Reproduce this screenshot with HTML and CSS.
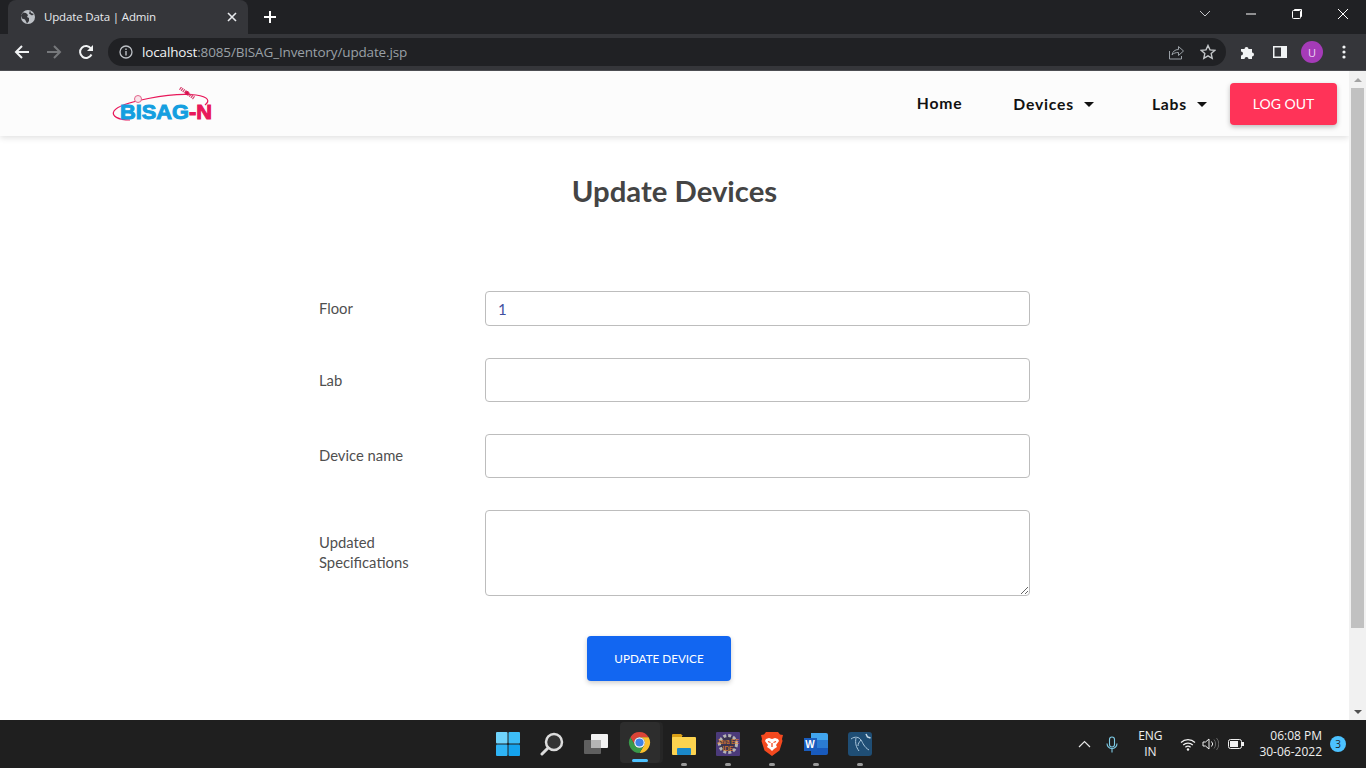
FILE: index.html
```html
<!DOCTYPE html>
<html lang="en">
<head>
    <meta charset="UTF-8">
    <title>Update Data | Admin</title>
    <link rel="stylesheet" href="styles.css">
</head>
<body>
    <div class="tabstrip">
        <div class="tab">
            <svg class="tab-icon" width="16" height="16" viewBox="0 0 16 16"><circle cx="8" cy="8" r="7" fill="#bdc1c6"/><path d="M3 3.500l3 .5 2 2-1 2 2 1v3l-2 2.500-2-4-3-1-1-3zM10 1.500l1 2.500 3 1-2 1.500-3-2z" fill="#35363a"/></svg>
            <span class="tab-title">Update Data | Admin</span>
            <svg class="tab-close" width="10" height="10" viewBox="0 0 10 10"><path d="M1 1l8 8M9 1l-8 8" stroke="#e8eaed" stroke-width="1.600"/></svg>
        </div>
        <svg class="new-tab" width="14" height="14" viewBox="0 0 14 14"><path d="M7 1v12M1 7h12" stroke="#fff" stroke-width="2"/></svg>
        <div class="window-controls">
            <div class="win-btn"><svg width="12" height="8" viewBox="0 0 12 8"><path d="M1 1l5 5 5-5" fill="none" stroke="#c4c6c9"/></svg></div>
            <div class="win-btn"><svg width="12" height="2" viewBox="0 0 12 2"><path d="M1 1h10" stroke="#fff"/></svg></div>
            <div class="win-btn"><svg width="12" height="12" viewBox="0 0 12 12"><path d="M3.500 2.500v-1h7v7h-1" fill="none" stroke="#fff"/><rect x="1.500" y="2.500" width="8" height="8" rx="1" fill="none" stroke="#fff"/></svg></div>
            <div class="win-btn"><svg width="12" height="12" viewBox="0 0 12 12"><path d="M1 1l10 10M11 1L1 11" stroke="#fff"/></svg></div>
        </div>
    </div>

    <div class="toolbar">
        <div class="tool-btn"><svg width="16" height="16" viewBox="0 0 16 16"><path d="M15 8H2M8 2L2 8l6 6" fill="none" stroke="#f1f3f4" stroke-width="2"/></svg></div>
        <div class="tool-btn"><svg width="16" height="16" viewBox="0 0 16 16"><path d="M1 8h13M8 2l6 6-6 6" fill="none" stroke="#76787b" stroke-width="2"/></svg></div>
        <div class="tool-btn"><svg width="16" height="16" viewBox="0 0 16 16"><path d="M13.500 10.500A6 6 0 1 1 13 4.500" fill="none" stroke="#f1f3f4" stroke-width="2"/><path d="M15 1v6H9z" fill="#f1f3f4"/></svg></div>
        <div class="omnibox">
            <svg class="info-icon" width="14" height="14" viewBox="0 0 14 14"><circle cx="7" cy="7" r="6" fill="none" stroke="#bdc1c6" stroke-width="1.300"/><path d="M7 6v4.500M7 3.500v1.500" stroke="#bdc1c6" stroke-width="1.400"/></svg>
            <span class="url"><span class="url-host">localhost</span>:8085/BISAG_Inventory/update.jsp</span>
            <svg class="omni-icon share-icon" width="16" height="16" viewBox="0 0 16 16"><path d="M1.500 7v8h12v-3" fill="none" stroke="#9aa0a6"/><path d="M4 11c.5-3.500 3-5.500 6.500-5.500V2.500L15.500 7l-5 4.500V8.500C8 8.500 5.500 9 4 11z" fill="none" stroke="#9aa0a6"/></svg>
            <svg class="omni-icon" width="16" height="16" viewBox="0 0 16 16"><path d="M8 1.500l2 4.400 4.700.5-3.500 3.200 1 4.700L8 11.900l-4.200 2.400 1-4.700L1.300 6.400 6 5.900z" fill="none" stroke="#c4c7ca" stroke-width="1.400"/></svg>
        </div>
        <div class="tool-btn ext-btn"><svg width="16" height="16" viewBox="0 0 16 16"><path d="M1 5h3.500a2 2 0 1 1 4 0H12v3.500a2 2 0 1 1 0 4V15H8.500a2 2 0 1 0-4 0H1v-3.500a2 2 0 1 0 0-4z" fill="#f1f3f4"/></svg></div>
        <div class="tool-btn"><svg width="14" height="12" viewBox="0 0 14 12"><rect width="14" height="12" fill="#f1f3f4"/><rect x="1.500" y="1.500" width="6.500" height="9" fill="#35363a"/></svg></div>
        <div class="tool-btn"><span class="avatar">U</span></div>
        <div class="tool-btn"><svg width="4" height="14" viewBox="0 0 4 14"><circle cx="2" cy="2" r="1.600" fill="#f1f3f4"/><circle cx="2" cy="7" r="1.600" fill="#f1f3f4"/><circle cx="2" cy="12" r="1.600" fill="#f1f3f4"/></svg></div>
    </div>

    <div class="viewport">
        <div class="page">
            <nav class="navbar">
                <a href="#" class="navbar-brand">
                    <svg width="102" height="42" viewBox="0 0 102 42">
                        <path d="M18 33C6 33-1 29 2 24 8 15 60 5 84 8 97 10 98 14 93 18" fill="none" stroke="#e8185a" stroke-width="1.200"/>
                        <path d="M68 1l14 10" stroke="#d8406f" stroke-width="3.500" stroke-dasharray="1.200 .8"/>
                        <circle cx="75" cy="6" r="2" fill="#d8104f"/>
                        <circle cx="26" cy="12" r="3.500" fill="#fbe3ea" stroke="#e0648a"/>
                        <text x="8" y="32" class="logo-text" textLength="92" lengthAdjust="spacingAndGlyphs"><tspan class="logo-blue">BISAG</tspan><tspan class="logo-pink">-N</tspan></text>
                    </svg>
                </a>
                <ul class="navbar-menu">
                    <li class="nav-home">Home</li>
                    <li class="nav-devices">Devices<span class="caret"></span></li>
                    <li class="nav-labs">Labs<span class="caret"></span></li>
                </ul>
                <button class="btn-logout">LOG OUT</button>
            </nav>

            <h1>Update Devices</h1>

            <form class="update-form">
                <label for="floor">Floor</label>
                <input type="text" id="floor" class="input-floor" value="1">
                <label for="lab" class="label-lab">Lab</label>
                <input type="text" id="lab">
                <label for="device">Device name</label>
                <input type="text" id="device">
                <label for="specs" class="label-specs">Updated Specifications</label>
                <textarea id="specs"></textarea>
                <div class="form-actions">
                    <button type="button" class="btn-update">UPDATE DEVICE</button>
                </div>
            </form>
        </div>
        <div class="scrollbar">
            <div class="scroll-arrow"><span class="arrow-up"></span></div>
            <div class="scroll-track"><div class="scroll-thumb"></div></div>
            <div class="scroll-arrow"><span class="arrow-down"></span></div>
        </div>
    </div>

    <div class="taskbar">
        <div></div>
        <div class="task-icons">
            <div class="task-item">
                <svg width="24" height="24" viewBox="0 0 24 24"><rect x="0" y="0" width="11.500" height="11.500" rx="1" fill="#6fd3fb"/><rect x="12.500" y="0" width="11.500" height="11.500" rx="1" fill="#3dbdf7"/><rect x="0" y="12.500" width="11.500" height="11.500" rx="1" fill="#2fb4f5"/><rect x="12.500" y="12.500" width="11.500" height="11.500" rx="1" fill="#14a3ee"/></svg>
            </div>
            <div class="task-item">
                <svg width="24" height="24" viewBox="0 0 24 24"><circle cx="14" cy="10" r="8" fill="#333" stroke="#dcdcdc" stroke-width="2.500"/><path d="M8 16l-6 6" stroke="#dcdcdc" stroke-width="3" stroke-linecap="round"/></svg>
            </div>
            <div class="task-item">
                <svg width="24" height="20" viewBox="0 0 24 20"><rect x="7" y="0" width="17" height="14" rx="1" fill="#f2f2f2"/><rect x="0" y="6" width="17" height="14" rx="1" fill="#5f5f5f"/><rect x="7" y="6" width="10" height="8" fill="#b5b5b5"/></svg>
            </div>
            <div class="task-item task-active">
                <svg width="23" height="23" viewBox="0 0 24 24"><path d="M12 1A11 11 0 0 1 21.530 6.500H12A5.500 5.500 0 0 0 7.240 14.750L2.470 6.500A11 11 0 0 1 12 1Z" fill="#db4437"/><path d="M21.530 6.500A11 11 0 0 1 12 23L16.760 14.750A5.500 5.500 0 0 0 12 6.500Z" fill="#fbc02d"/><path d="M2.470 6.500L7.240 14.750A5.500 5.500 0 0 0 16.760 14.750L12 23A11 11 0 0 1 2.470 6.500Z" fill="#3a9a4a"/><circle cx="12" cy="12" r="5.500" fill="#fff"/><circle cx="12" cy="12" r="4.300" fill="#3f83e8"/></svg>
                <span class="task-bar"></span>
            </div>
            <div class="task-item task-open">
                <svg width="24" height="22" viewBox="0 0 24 22"><path d="M0 2a1 1 0 0 1 1-1h8l2 2h-11z M0 3h10v3H0z" fill="#d99f16"/><rect x="0" y="4" width="24" height="18" rx="1" fill="#fcd34f"/><rect x="5" y="15" width="14" height="7" rx="1" fill="#1a88c9"/></svg>
                <span class="task-dot"></span>
            </div>
            <div class="task-item task-open">
                <svg width="24" height="24" viewBox="0 0 24 24">
                    <rect width="24" height="24" rx="1" fill="#4b3a7a"/>
                    <circle cx="12" cy="12" r="8.500" fill="#3a3350" stroke="#b5b5b5" stroke-width="3" stroke-dasharray="3 2"/>
                    <text x="12" y="11.500" class="java-text" textLength="22" lengthAdjust="spacingAndGlyphs">Java EE</text>
                    <text x="12" y="18.500" class="java-text">IDE</text>
                </svg>
                <span class="task-dot"></span>
            </div>
            <div class="task-item task-open">
                <svg width="22" height="24" viewBox="0 0 22 24"><path d="M5 0h12l2 2.500 3 .5-1 4 .5 2-3 9.500L11 24l-7.500-5.500L.5 9 1 7 0 3l3-.5z" fill="#f4491f"/><path d="M11 7l-3-1-3 1-1 2 3 4-1 2 3 2 2 2 2-2 3-2-1-2 3-4-1-2-3-1z" fill="#fff"/><path d="M7 9.500l2.500 1M15 9.500l-2.500 1M11 11v4" stroke="#f4491f" stroke-width="1.300"/></svg>
                <span class="task-dot"></span>
            </div>
            <div class="task-item task-open">
                <div class="word-icon"><span class="word-w">W</span></div>
                <span class="task-dot"></span>
            </div>
            <div class="task-item task-open">
                <svg width="24" height="24" viewBox="0 0 24 24"><rect width="24" height="24" rx="3" fill="#1f4e75"/><path d="M3 7c4-3 8-2 10 1s3 7 8 10M8 6c-1 5 0 9 3 13M13 8c-2 2-3 4-3 6" fill="none" stroke="#a9c6dc" stroke-width="1"/><path d="M18 2l1.500 3 3 1" fill="none" stroke="#c7dbe9" stroke-width="1.500"/></svg>
                <span class="task-dot"></span>
            </div>
        </div>
        <div class="tray">
            <svg class="tray-chevron" width="13" height="8" viewBox="0 0 13 8"><path d="M1 7l5.500-5.500L12 7" fill="none" stroke="#e6e6e6" stroke-width="1.200"/></svg>
            <svg class="tray-mic" width="12" height="17" viewBox="0 0 12 17"><rect x="3.500" y="1" width="5" height="10" rx="2.500" fill="none" stroke="#7ecbe6" stroke-width="1.100"/><path d="M1 7.500a5 5 0 0 0 10 0M6 13v3.500" fill="none" stroke="#7ecbe6" stroke-width="1.100"/></svg>
            <div class="tray-lang">ENG<br>IN</div>
            <svg class="tray-wifi" width="16" height="13" viewBox="0 0 16 13"><path d="M1 4.500a10 10 0 0 1 14 0M3.200 7a7 7 0 0 1 9.600 0M5.400 9.300a3.800 3.800 0 0 1 5.200 0" fill="none" stroke="#f0f0f0" stroke-width="1.200"/><circle cx="8" cy="11.500" r="1.200" fill="#f0f0f0"/></svg>
            <svg class="tray-volume" width="17" height="14" viewBox="0 0 17 14"><path d="M1 5v4h2.500L7 12V2L3.500 5z" fill="none" stroke="#f0f0f0"/><path d="M9.500 4.500a3.500 3.500 0 0 1 0 5" fill="none" stroke="#f0f0f0"/><path d="M12 2.500a7 7 0 0 1 0 9M14.500 1a9 9 0 0 1 0 12" fill="none" stroke="#666"/></svg>
            <svg class="tray-battery" width="16" height="10" viewBox="0 0 16 10"><rect x=".5" y=".5" width="13" height="9" rx="2" fill="none" stroke="#f0f0f0"/><rect x="2" y="2" width="8" height="6" fill="#f0f0f0"/><rect x="14" y="3" width="2" height="4" fill="#f0f0f0"/></svg>
            <div class="tray-clock">06:08 PM<br>30-06-2022</div>
            <span class="tray-badge">3</span>
        </div>
    </div>
</body>
</html>
```

FILE: styles.css
```css
:root {
    --chrome-dark: #202124;
    --chrome-mid: #35363a;
    --color-logout: #ff3358;
    --color-update: #1266f1;
    --color-text: #4f4f4f;
    --color-border: #bdbdbd;
}

* {
    box-sizing: border-box;
}

html, body {
    height: 100%;
}

body {
    margin: 0;
    height: 768px;
    overflow: hidden;
    display: flex;
    flex-direction: column;
    font-family: "Lato", "Liberation Sans", sans-serif;
    background-color: white;
}

/* browser frame */
.tabstrip {
    height: 34px;
    flex: none;
    display: flex;
    align-items: center;
    padding-left: 8px;
    background-color: var(--chrome-dark);
}

.tab {
    width: 240px;
    height: 34px;
    display: flex;
    align-items: center;
    padding: 0 11px 0 12px;
    background-color: var(--chrome-mid);
    border-radius: 8px 8px 0 0;
}

.tab-title {
    flex: 1;
    margin-left: 8px;
    padding-bottom: 1px;
    font-family: "Open Sans", "Noto Sans", sans-serif;
    font-size: 11.500px;
    letter-spacing: -0.15px;
    color: #e8eaed;
}

.new-tab {
    margin-left: 15px;
}

.window-controls {
    margin-left: auto;
    display: flex;
    height: 100%;
}

.win-btn {
    width: 46px;
    display: flex;
    align-items: center;
    justify-content: center;
    padding-bottom: 6px;
}

.toolbar {
    height: 37px;
    flex: none;
    display: flex;
    align-items: center;
    padding: 0 6px;
    background-color: var(--chrome-mid);
    border-bottom: 1px solid #4c4d52;
}

.tool-btn {
    width: 32px;
    height: 28px;
    flex: none;
    display: flex;
    align-items: center;
    justify-content: center;
}

.omnibox {
    width: 1118px;
    height: 28px;
    margin-left: 6px;
    display: flex;
    align-items: center;
    padding: 0 10px 0 11px;
    background-color: var(--chrome-dark);
    border-radius: 14px;
}

.url {
    flex: 1;
    margin-left: 9px;
    font-family: "Open Sans", "Noto Sans", sans-serif;
    font-size: 13.500px;
    letter-spacing: -0.15px;
    color: #9aa0a6;
}

.url-host {
    color: #f1f3f4;
}

.omni-icon {
    flex: none;
}

.share-icon {
    margin-right: 16px;
}

.ext-btn {
    margin-left: 6px;
}

.avatar {
    width: 22px;
    height: 22px;
    display: flex;
    align-items: center;
    justify-content: center;
    border-radius: 50%;
    background-color: #a53bb8;
    color: #f0d9f5;
    font-family: "Open Sans", sans-serif;
    font-size: 11px;
}

/* page */
.viewport {
    flex: 1;
    display: flex;
    min-height: 0;
}

.page {
    flex: 1;
    min-width: 0;
    overflow: hidden;
}

.navbar {
    height: 65px;
    display: flex;
    align-items: center;
    padding: 0 12px 0 112px;
    background-color: #fcfcfc;
    box-shadow: 0 2px 6px rgba(0, 0, 0, 0.12);
}

.navbar-brand {
    display: block;
    height: 42px;
    margin-top: 9px;
}

.logo-text {
    font-family: "Liberation Sans", sans-serif;
    font-size: 21px;
    font-weight: bold;
    stroke-width: 1px;
}

.logo-blue {
    fill: #149fe0;
    stroke: #149fe0;
}

.logo-pink {
    fill: #e8185a;
    stroke: #e8185a;
}

.navbar-menu {
    list-style: none;
    margin: 0 0 0 auto;
    padding: 0;
    display: flex;
    align-items: center;
    font-size: 15.700px;
    font-weight: bold;
    letter-spacing: 0.8px;
    color: #111;
}

.nav-home {
    margin-bottom: 2px;
}

.nav-devices {
    margin-left: 51px;
}

.nav-labs {
    margin-left: 58px;
}

.caret {
    display: inline-block;
    margin-left: 10px;
    vertical-align: 3px;
    border-top: 5px solid #111;
    border-left: 5px solid transparent;
    border-right: 5px solid transparent;
}

.btn-logout {
    width: 107px;
    height: 42px;
    margin-left: 23px;
    border: none;
    border-radius: 4px;
    background-color: var(--color-logout);
    color: white;
    font-family: inherit;
    font-size: 14px;
    box-shadow: 0 2px 5px rgba(0, 0, 0, 0.25);
}

h1 {
    margin: 37px 0 0;
    text-align: center;
    font-size: 29.300px;
    line-height: 36px;
    font-weight: bold;
    color: #444;
}

.update-form {
    width: 711px;
    margin: 82px 0 0 319px;
    display: grid;
    grid-template-columns: 166px 545px;
    row-gap: 32px;
    align-items: center;
    font-size: 14.800px;
    color: var(--color-text);
}

label {
    line-height: 20px;
    margin-bottom: 2px;
}

.label-lab {
    margin-bottom: 0;
}

input, textarea {
    display: block;
    width: 100%;
    height: 44px;
    margin: 0;
    padding: 0 12px;
    border: 1px solid var(--color-border);
    border-radius: 4px;
    background-color: white;
    font-family: inherit;
    font-size: 15px;
    color: #3f4fa0;
}

.input-floor {
    height: 35px;
}

textarea {
    height: 86px;
}

.label-specs {
    width: 110px;
}

.form-actions {
    grid-column: 1 / -1;
    margin: 8px 0 0 268px;
}

.btn-update {
    width: 144px;
    height: 45px;
    padding-bottom: 3px;
    border: none;
    border-radius: 4px;
    background-color: var(--color-update);
    color: white;
    font-family: inherit;
    font-size: 11.700px;
    box-shadow: 0 2px 5px rgba(0, 0, 0, 0.2);
}

.scrollbar {
    width: 17px;
    flex: none;
    display: flex;
    flex-direction: column;
    background-color: #f1f1f1;
}

.scroll-arrow {
    height: 17px;
    flex: none;
    display: flex;
    align-items: center;
    justify-content: center;
}

.arrow-up {
    border-bottom: 4px solid #a3a3a3;
    border-left: 4px solid transparent;
    border-right: 4px solid transparent;
}

.arrow-down {
    border-top: 4px solid #505050;
    border-left: 4px solid transparent;
    border-right: 4px solid transparent;
}

.scroll-track {
    flex: 1;
    padding: 0 2px;
}

.scroll-thumb {
    height: 540px;
    background-color: #c1c1c1;
}

/* windows taskbar */
.taskbar {
    height: 48px;
    flex: none;
    display: grid;
    grid-template-columns: 1fr auto 1fr;
    align-items: center;
    background-color: #1f1f1f;
    color: #f0f0f0;
}

.task-icons {
    display: flex;
    margin-left: 1px;
}

.task-item {
    position: relative;
    width: 44px;
    height: 44px;
    display: flex;
    align-items: center;
    justify-content: center;
}

.task-active {
    width: 40px;
    height: 41px;
    margin: 0 2px;
    background-color: #2d2d2d;
    border-radius: 4px;
    box-shadow: 3px 0 0 #262626;
}

.task-bar {
    position: absolute;
    left: 12px;
    bottom: 1px;
    width: 16px;
    height: 3px;
    border-radius: 2px;
    background-color: #4cc2ff;
}

.task-dot {
    position: absolute;
    left: 19px;
    bottom: 0;
    width: 6px;
    height: 3px;
    border-radius: 2px;
    background-color: #9a9a9a;
}

.java-text {
    fill: #f08a24;
    font-family: "Liberation Sans", sans-serif;
    font-size: 6.500px;
    text-anchor: middle;
}

.word-icon {
    position: relative;
    width: 24px;
    height: 22px;
    border-radius: 2px;
    background: linear-gradient(#41a5ee 0 33%, #2b7cd3 33% 66%, #185abd 66%);
    background-size: 17px 100%;
    background-position: right;
    background-repeat: no-repeat;
}

.word-w {
    position: absolute;
    left: 0;
    top: 5px;
    width: 13px;
    height: 13px;
    background-color: #1a5dbe;
    color: white;
    font-family: "Liberation Sans", sans-serif;
    font-size: 10px;
    font-weight: bold;
    line-height: 13px;
    text-align: center;
}

.tray {
    display: flex;
    align-items: center;
    justify-content: flex-end;
    padding-right: 20px;
    font-family: "Open Sans", "Noto Sans", sans-serif;
    font-size: 12px;
}

.tray-mic {
    margin-left: 15px;
}

.tray-lang {
    width: 26px;
    margin-left: 19px;
    line-height: 16px;
    text-align: center;
    white-space: nowrap;
}

.tray-wifi {
    margin-left: 17px;
}

.tray-volume {
    margin-left: 6px;
}

.tray-battery {
    margin-left: 9px;
}

.tray-clock {
    margin-left: 15px;
    line-height: 16px;
    text-align: right;
    white-space: nowrap;
}

.tray-badge {
    width: 16px;
    height: 16px;
    margin-left: 8px;
    flex: none;
    border-radius: 50%;
    background-color: #4cc2ff;
    color: #1f1f1f;
    font-size: 10px;
    line-height: 16px;
    text-align: center;
}
```
